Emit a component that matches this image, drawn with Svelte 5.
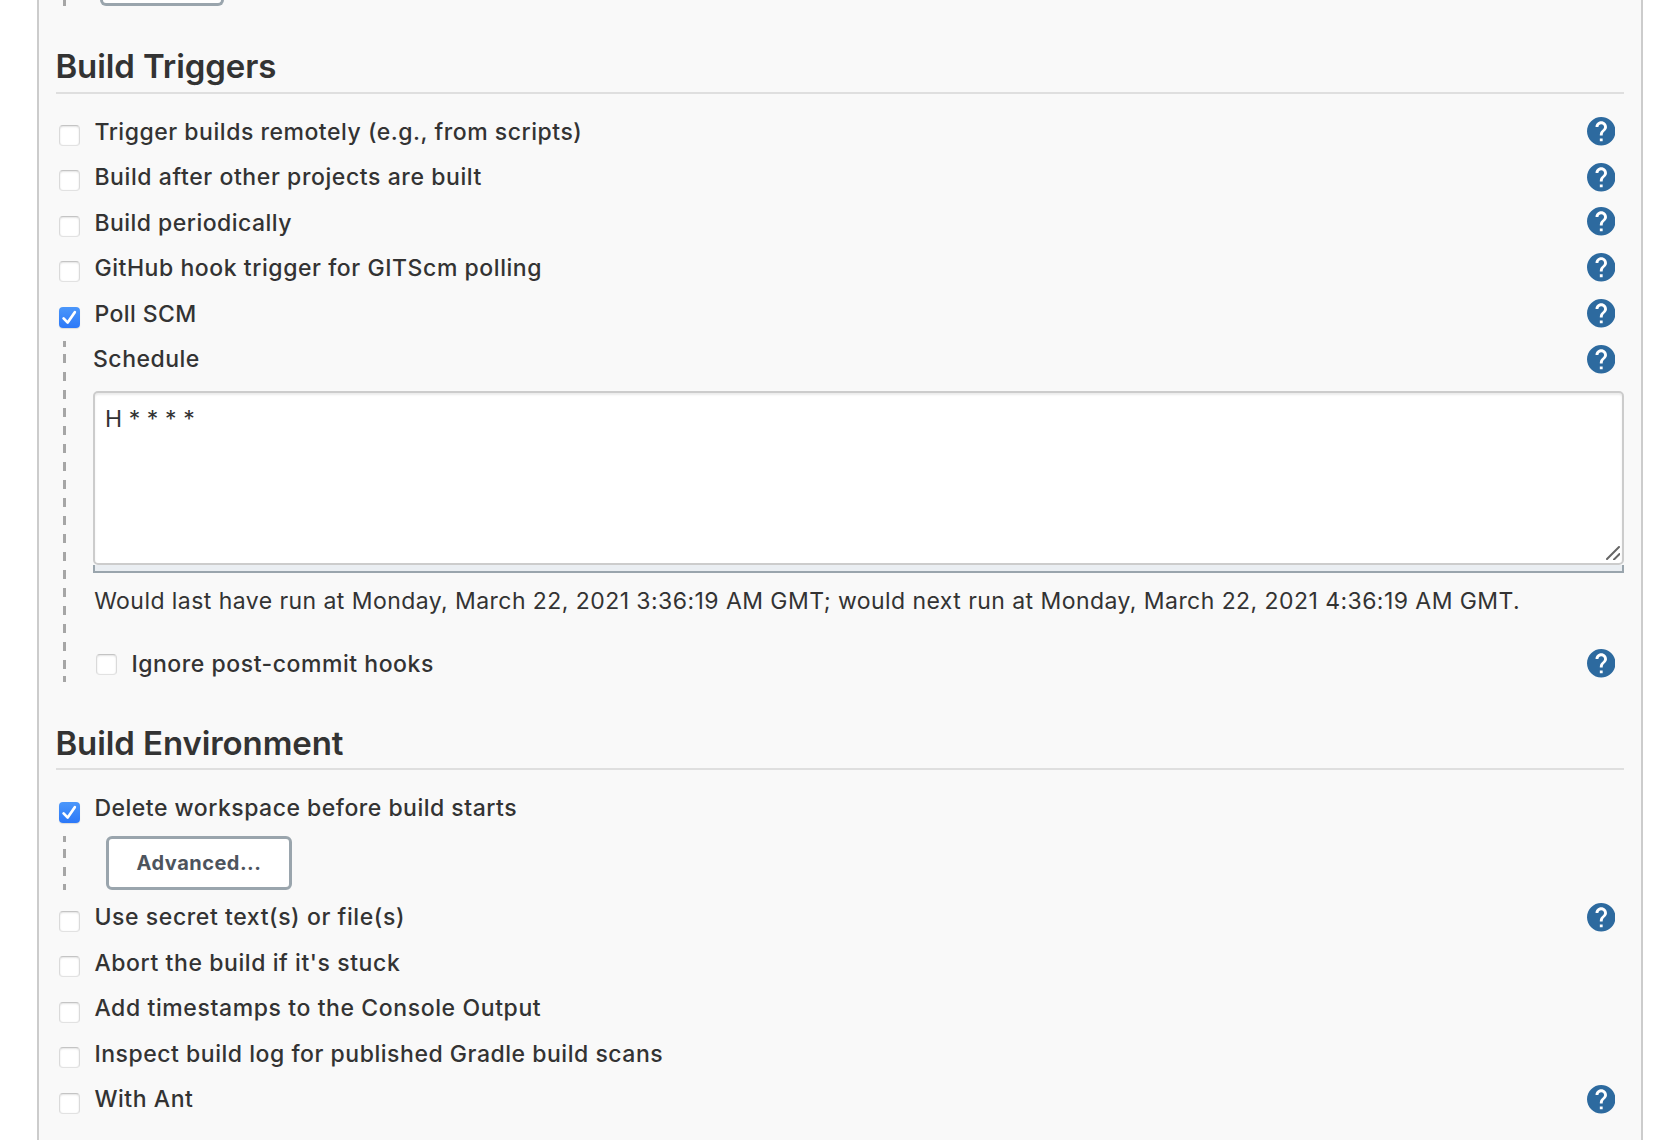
<script>
  // pad: distance from the row's top to its checkbox; help: offset of the help icon, or null for none
  const triggers = [
    { label: 'Trigger builds remotely (e.g., from scripts)', height: 45, pad: 8, help: 0, track: 0.53 },
    { label: 'Build after other projects are built', height: 46, pad: 8, help: 1, track: 0.59 },
    { label: 'Build periodically', height: 45, pad: 8, help: -1, track: 0.47 },
    { label: 'GitHub hook trigger for GITScm polling', height: 46, pad: 8, help: 0, track: 0.56 },
    { label: 'Poll SCM', height: 42, pad: 8, help: 0, track: 0.42, checked: true }
  ];
  const ignore = { label: 'Ignore post-commit hooks', height: 33, pad: 5, help: 0, track: 0.54 };
  const cleanup = { label: 'Delete workspace before build starts', height: 43, pad: 9, help: null, track: 0.5, checked: true };
  const environment = [
    { label: 'Use secret text(s) or file(s)', height: 46, pad: 9, help: 1, track: 0.59 },
    { label: "Abort the build if it's stuck", height: 45, pad: 8, help: null, track: 0.58 },
    { label: 'Add timestamps to the Console Output', height: 46, pad: 9, help: null, track: 0.6 },
    { label: 'Inspect build log for published Gradle build scans', height: 45, pad: 8, help: null, track: 0.53 },
    { label: 'With Ant', height: 56, pad: 9, help: 1, track: 0.55 }
  ];
  let schedule = 'H * * * *';
</script>

{#snippet helpIcon(shift)}
  <svg class="help" style:--shift="{shift}px" viewBox="2 2 20 20" role="img" aria-label="Help">
    <circle cx="12" cy="12" r="9" fill="#fff" />
    <path fill="#2d6a9f" d="M12 2C6.48 2 2 6.48 2 12s4.48 10 10 10 10-4.48 10-10S17.52 2 12 2zm1 17h-2v-2h2v2zm2.07-7.75l-.9.92C13.45 12.9 13 13.5 13 15h-2v-.5c0-1.1.45-2.1 1.17-2.83l1.24-1.26c.37-.36.59-.86.59-1.41 0-1.1-.9-2-2-2s-2 .9-2 2H8c0-2.21 1.79-4 4-4s4 1.79 4 4c0 .88-.36 1.68-.93 2.25z" />
  </svg>
{/snippet}

{#snippet option(row)}
  <div class="row" style:--h="{row.height}px" style:--pad="{row.pad}px" style:--track="{row.track}px">
    <label>
      <input type="checkbox" checked={row.checked} />
      <span class="box" class:on={row.checked}>
        {#if row.checked}
          <svg viewBox="0 0 21 21"><path d="M4.6 11.4 L8.7 15.6 L15.8 5.2" /></svg>
        {/if}
      </span>
      <span class="text">{row.label}</span>
    </label>
    {#if row.help !== null}{@render helpIcon(row.help)}{/if}
  </div>
{/snippet}

<main class="panel">
  <div class="previous"><div class="cut-button"></div></div>

  <section>
    <h2>Build Triggers</h2>
    {#each triggers as row}{@render option(row)}{/each}
    <div class="nested poll">
      <div class="schedule-head">
        <span>Schedule</span>
        {@render helpIcon(1)}
      </div>
      <div class="editor">
        <textarea bind:value={schedule} spellcheck="false" aria-label="Schedule"></textarea>
        <svg class="grip" viewBox="0 0 14 14"><path d="M1 13 L13 1 M8 13.5 L13.5 8" /></svg>
      </div>
      <div class="handle"></div>
      <p>Would last have run at Monday, March 22, 2021 3:36:19 AM GMT; would next run at Monday, March 22, 2021 4:36:19 AM GMT.</p>
      {@render option(ignore)}
    </div>
  </section>

  <section>
    <h2 class="second">Build Environment</h2>
    {@render option(cleanup)}
    <div class="nested advanced"><button type="button">Advanced...</button></div>
    {#each environment as row}{@render option(row)}{/each}
  </section>
</main>

<style>
  :global(body) { background: #fff; overflow: hidden; }
  .panel {
    box-sizing: border-box;
    width: 1606px;
    height: 1140px;
    margin-left: 37px;
    padding: 0 17px;
    overflow: hidden;
    border: solid #ccc;
    border-width: 0 2px;
    background: #f9f9f9;
    color: #333;
    font: 500 23px/30px Inter, "Liberation Sans", sans-serif;
  }
  .previous {
    display: flex;
    align-items: flex-end;
    height: 6px;
    padding-left: 44px;
    background: linear-gradient(#a6a6a6, #a6a6a6) 7px 0 / 3px 6px no-repeat;
  }
  .cut-button {
    box-sizing: border-box;
    width: 124px;
    height: 6px;
    border: 3px solid #9aa5ad;
    border-top: 0;
    border-radius: 0 0 6px 6px;
    background: #fff;
  }
  h2 {
    margin: 0 0 23px;
    padding: 40px 0 6px;
    border-bottom: 2px solid #dfdfdf;
    font-size: 33px;
    font-weight: 600;
    line-height: 40px;
    letter-spacing: -0.09px;
    text-indent: -0.6px;
  }
  h2.second { padding: 41px 0 5px; }
  .row {
    display: flex;
    justify-content: space-between;
    align-items: flex-start;
    height: var(--h);
    padding: 0 9px 0 3px;
    letter-spacing: var(--track);
  }
  label { display: flex; align-items: flex-start; gap: 14.4px; }
  input { position: absolute; opacity: 0; pointer-events: none; }
  .box {
    box-sizing: border-box;
    width: 21px;
    height: 21px;
    margin-top: var(--pad);
    border: 1px solid #dadada;
    border-top-color: #c4c4c4;
    border-bottom-color: #e2e2e2;
    border-radius: 4px;
    background: #fff;
    box-shadow: inset 0 1px 2px rgba(0, 0, 0, 0.1), inset 0 0 1px rgba(0, 0, 0, 0.08);
  }
  .box.on {
    border: 0;
    background: linear-gradient(#4b97fa, #2c78f8);
    box-shadow: 0 1px 1px rgba(0, 0, 0, 0.12);
  }
  .box svg { display: block; width: 21px; height: 21px; }
  .box path { fill: none; stroke: #fff; stroke-width: 2.7; stroke-linecap: round; stroke-linejoin: round; }
  .help { flex: none; width: 28.5px; height: 28.5px; margin-top: var(--shift); }
  .nested {
    box-sizing: border-box;
    background:
      linear-gradient(#a6a6a6, #a6a6a6) 7px 0 / 3px 6px no-repeat,
      linear-gradient(#a6a6a6, #a6a6a6) 7px 100% / 3px 6px no-repeat,
      repeating-linear-gradient(#a6a6a6 0 9px, transparent 9px 18px) 7px 13px / 3px calc(100% - 26px) no-repeat;
  }
  .poll { height: 341px; padding: 3px 0 0 37px; }
  .schedule-head {
    display: flex;
    justify-content: space-between;
    align-items: flex-start;
    height: 47px;
    padding-right: 9px;
    letter-spacing: 0.5px;
  }
  .editor { position: relative; height: 174px; }
  textarea {
    display: block;
    box-sizing: border-box;
    width: 100%;
    height: 174px;
    margin: 0;
    padding: 11px 10px;
    border: 2px solid #ccc;
    border-radius: 5px;
    outline: 0;
    resize: none;
    background: #fff;
    box-shadow: inset 0 2px 2px rgba(0, 0, 0, 0.08);
    color: #333;
    font: 400 23px/30px Inter, "Liberation Sans", sans-serif;
    letter-spacing: 0.08px;
  }
  .grip { position: absolute; right: 4px; bottom: 5px; width: 14px; height: 14px; }
  .grip path { fill: none; stroke: #666; stroke-width: 2; stroke-linecap: round; }
  .handle {
    box-sizing: border-box;
    height: 8px;
    border: 2px solid #9aa5ad;
    border-top: 0;
    background: #eaeef2;
  }
  p {
    margin: 13px 0 33px;
    padding-left: 1.2px;
    font-weight: 400;
    letter-spacing: 0.44px;
    white-space: nowrap;
  }
  .advanced { height: 54px; margin-bottom: 12px; padding-left: 50px; }
  button {
    box-sizing: border-box;
    display: block;
    width: 186px;
    height: 54px;
    padding: 0;
    border: 3px solid #9aa5ad;
    border-radius: 6px;
    background: #fff;
    color: #4d545d;
    font: 700 20px/46px Inter, "Liberation Sans", sans-serif;
    letter-spacing: 0.48px;
  }
</style>
